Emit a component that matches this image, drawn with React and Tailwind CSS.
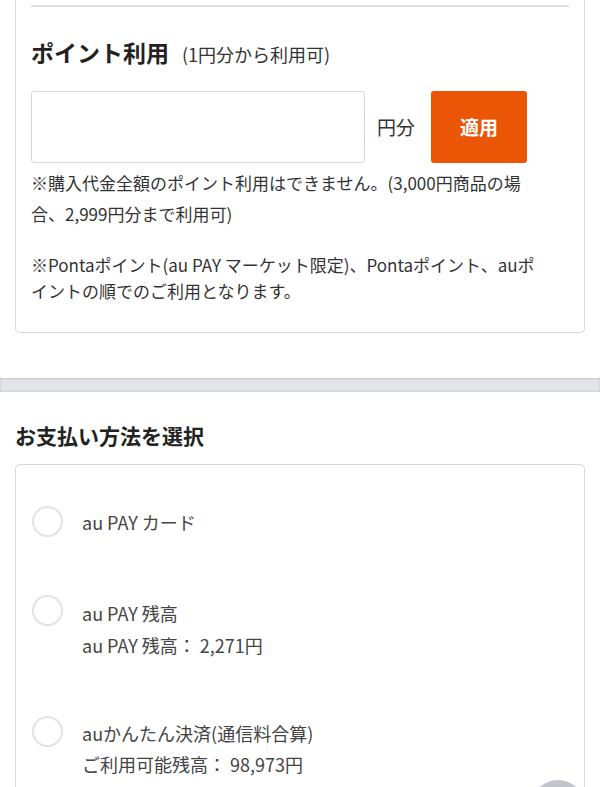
import React from "react";

const font = { fontFamily: '"Noto Sans CJK JP", "Noto Sans", sans-serif' };

function Radio() {
  return <span className="block w-[31px] h-[31px] rounded-full border-2 border-[#e2e2e2] bg-white shrink-0" />;
}

export default function App() {
  return (
    <div className="w-[600px] h-[787px] bg-white overflow-hidden relative text-[#333]" style={font}>
      <div className="mx-[15px] border border-t-0 border-[#d9d9d9] rounded-b-[5px] px-[15px] pt-[5px] pb-[28px]">
        <div className="h-[2px] bg-[#dedede]" />
        <div className="mt-[29px] flex items-baseline">
          <span className="text-[23px] font-bold leading-[32px] text-[#222]">ポイント利用</span>
          <span className="ml-[13px] text-[18px] text-[#333]">(1円分から利用可)</span>
        </div>
        <div className="mt-[23px] flex items-center h-[72px]">
          <div className="w-[334px] h-full border border-[#d6d6d6] rounded-[3px]" />
          <span className="ml-[12px] text-[19px]">円分</span>
          <button className="ml-[16px] w-[96px] h-full rounded-[3px] bg-[#ea5506] text-white text-[19px] font-bold">適用</button>
        </div>
        <p className="mt-[4px] text-[17px] leading-[31px] whitespace-nowrap">
          ※購入代金全額のポイント利用はできません。(3,000円商品の場<br />合、2,999円分まで利用可)
        </p>
        <p className="mt-[23px] text-[17px] leading-[26px] whitespace-nowrap">
          ※Pontaポイント(au PAY マーケット限定)、Pontaポイント、auポ<br />イントの順でのご利用となります。
        </p>
      </div>
      <div className="mt-[45px] h-[14px] bg-[#e3e4e8] shadow-[inset_0_1px_2px_rgba(0,0,0,0.15),inset_0_-1px_2px_rgba(0,0,0,0.08)]" />
      <h2 className="mt-[29px] ml-[15px] text-[21px] font-bold leading-[28px] text-[#222]">お支払い方法を選択</h2>
      <div className="mt-[15px] mx-[15px] border border-[#d9d9d9] rounded-[5px] px-[16px] pt-[41px] pb-[40px] flex flex-col">
        <div className="flex items-start gap-[19px]">
          <Radio />
          <div className="text-[18px] leading-[31px] text-[#444] pt-[1px]">au PAY カード</div>
        </div>
        <div className="mt-[57px] flex items-start gap-[19px]">
          <Radio />
          <div className="text-[18px] leading-[32px] text-[#444] pt-[2px]">
            <div>au PAY 残高</div>
            <div>au PAY 残高： 2,271円</div>
          </div>
        </div>
        <div className="mt-[55px] flex items-start gap-[19px]">
          <Radio />
          <div className="text-[18px] leading-[31px] text-[#444] pt-[2px]">
            <div>auかんたん決済(通信料合算)</div>
            <div>ご利用可能残高： 98,973円</div>
          </div>
        </div>
      </div>
      <div className="absolute left-[530px] top-[780px] w-[56px] h-[56px] rounded-full bg-[#c4c4cc]" />
    </div>
  );
}
